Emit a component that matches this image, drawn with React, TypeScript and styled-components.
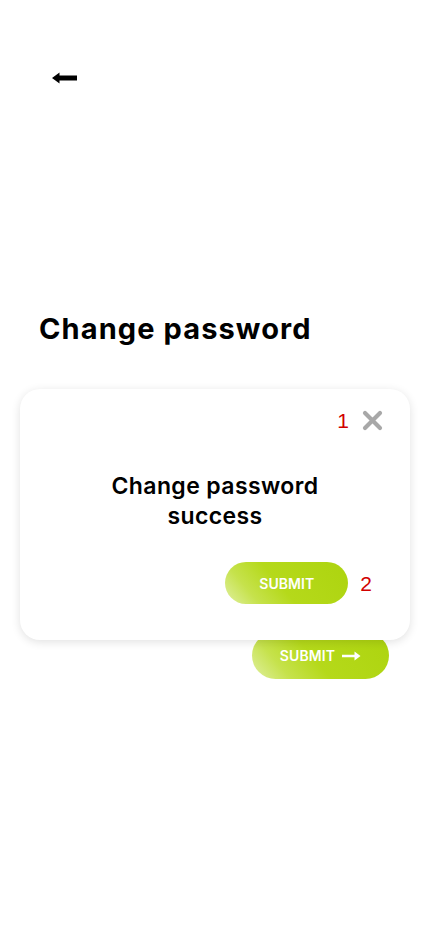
import React from "react";
import styled, { createGlobalStyle } from "styled-components";

const Global = createGlobalStyle`
  html, body { margin: 0; padding: 0; background: #ffffff; }
  body { font-family: Inter, "Noto Sans", sans-serif; color: #000; }
  * { box-sizing: border-box; }
`;

const Page = styled.div`
  position: relative;
  width: 428px;
  min-height: 926px;
  background: #fff;
  display: flex;
  flex-direction: column;
`;

const TopBar = styled.div`
  padding: 72px 0 0 51px;
  height: 84px;
`;

const BackButton = styled.button`
  border: none;
  background: none;
  padding: 0;
  width: 27px;
  height: 12px;
  display: block;
  cursor: pointer;
`;

const Title = styled.h1`
  margin: 228px 0 0 39px;
  font-size: 29px;
  line-height: 34px;
  font-weight: 700;
  letter-spacing: 1.1px;
`;

const FormArea = styled.div`
  height: 286px;
`;

const Actions = styled.div`
  display: flex;
  justify-content: flex-end;
  padding-right: 39px;
`;

const GreenButton = styled.button<{ $w: number; $h: number }>`
  width: ${(p) => p.$w}px;
  height: ${(p) => p.$h}px;
  border: none;
  border-radius: 999px;
  background: linear-gradient(50deg, #e0f0a2 0%, #c6e24c 22%, #b5d91a 45%, #add40f 100%);
  color: #fff;
  font-family: Inter, "Noto Sans", sans-serif;
  font-weight: 600;
  font-size: 14px;
  letter-spacing: 0.1px;
  display: flex;
  align-items: center;
  justify-content: center;
  gap: 7px;
  cursor: pointer;
`;

const Modal = styled.div`
  position: absolute;
  top: 389px;
  left: 20px;
  width: 390px;
  height: 251px;
  background: #fff;
  border-radius: 20px;
  box-shadow: 0 2px 10px rgba(0, 0, 0, 0.12);
  display: flex;
  flex-direction: column;
`;

const ModalHeader = styled.div`
  display: flex;
  justify-content: flex-end;
  align-items: center;
  gap: 13px;
  padding: 21px 27px 0 0;
  height: 42px;
`;

const Marker = styled.span`
  color: #d10000;
  font-family: "Liberation Sans", Arial, sans-serif;
  font-size: 21px;
  line-height: 21px;
`;

const CloseButton = styled.button`
  border: none;
  background: none;
  padding: 0;
  width: 21px;
  height: 21px;
  display: block;
  cursor: pointer;
`;

const ModalTitle = styled.h2`
  margin: 40px 0 0;
  text-align: center;
  font-size: 23px;
  line-height: 30px;
  font-weight: 600;
  letter-spacing: 0.4px;
`;

const ModalFooter = styled.div`
  display: flex;
  justify-content: flex-end;
  align-items: center;
  gap: 12px;
  padding-right: 38px;
  margin-top: 31px;
`;

const BackArrow = () => (
  <svg width="27" height="12" viewBox="0 0 27 12">
    <path d="M1 6 L8.5 0.5 L8.5 3.5 L26 3.5 L26 8.5 L8.5 8.5 L8.5 11.5 Z" fill="#000" />
  </svg>
);

const RightArrow = () => (
  <svg width="19" height="10" viewBox="0 0 19 10">
    <path d="M0 3.8 H12.5 V0.5 L18.5 5 L12.5 9.5 V6.2 H0 Z" fill="#fff" />
  </svg>
);

const CloseIcon = () => (
  <svg width="21" height="21" viewBox="0 0 21 21">
    <path d="M3 3 L18 18 M18 3 L3 18" stroke="#a8a8a8" strokeWidth="4.2" strokeLinecap="round" />
  </svg>
);

export default function App() {
  return (
    <>
      <Global />
      <Page>
        <TopBar>
          <BackButton aria-label="back">
            <BackArrow />
          </BackButton>
        </TopBar>
        <Title>Change password</Title>
        <FormArea />
        <Actions>
          <GreenButton $w={137} $h={47}>
            SUBMIT <RightArrow />
          </GreenButton>
        </Actions>
        <Modal>
          <ModalHeader>
            <Marker>1</Marker>
            <CloseButton aria-label="close">
              <CloseIcon />
            </CloseButton>
          </ModalHeader>
          <ModalTitle>
            Change password
            <br />
            success
          </ModalTitle>
          <ModalFooter>
            <GreenButton $w={123} $h={42}>SUBMIT</GreenButton>
            <Marker>2</Marker>
          </ModalFooter>
        </Modal>
      </Page>
    </>
  );
}
